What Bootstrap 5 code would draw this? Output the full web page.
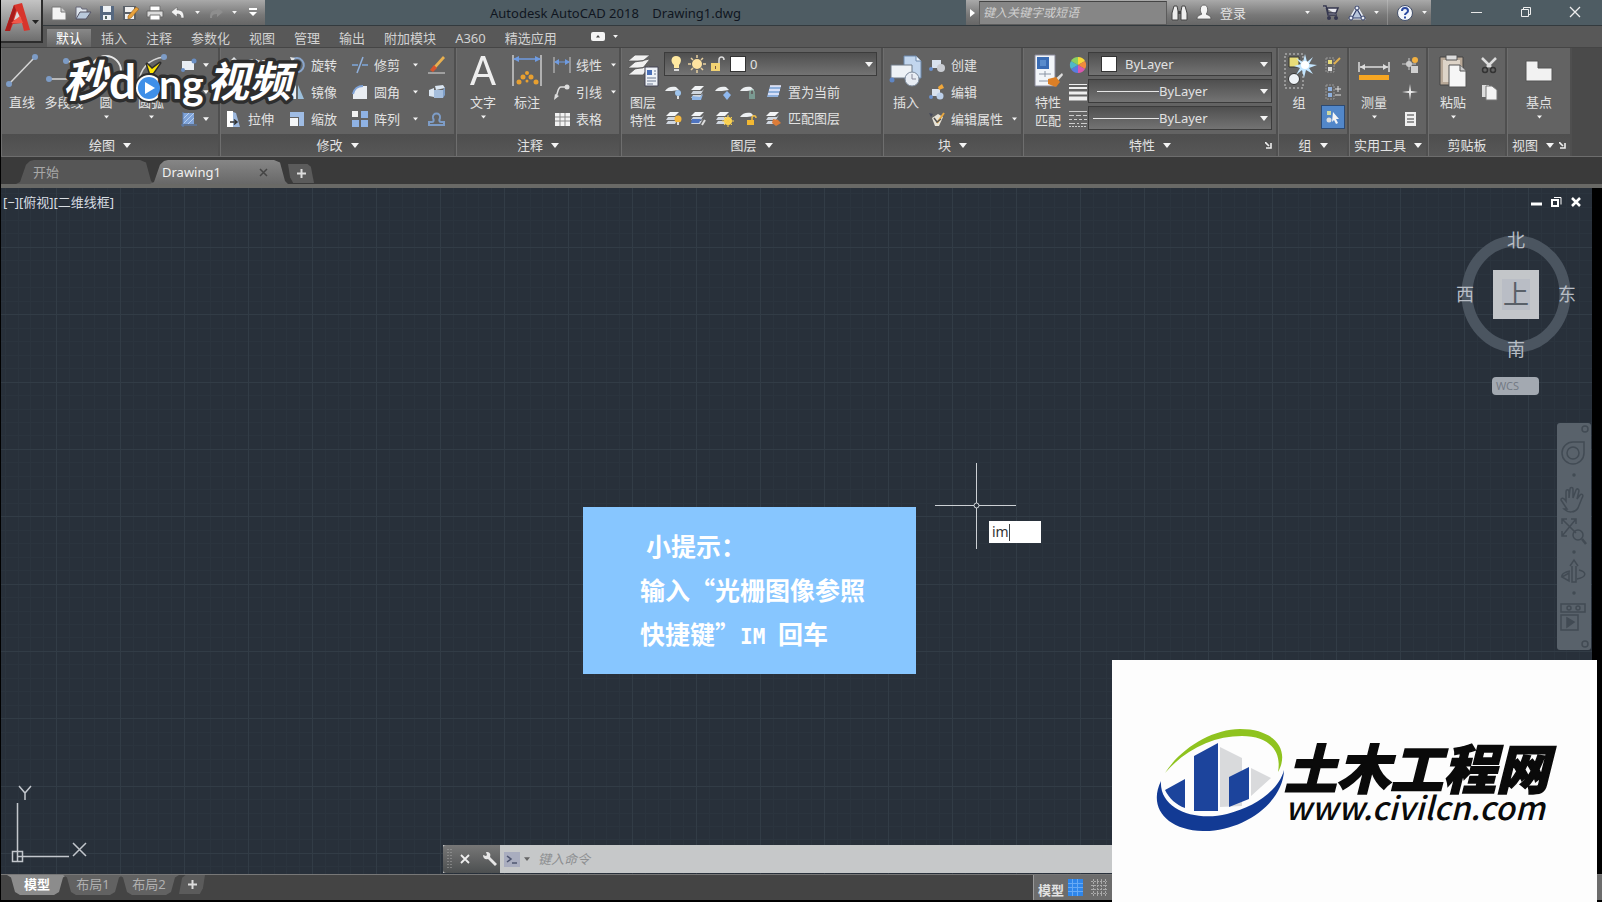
<!DOCTYPE html>
<html lang="zh-CN">
<head>
<meta charset="utf-8">
<meta name="viewport" content="width=device-width, initial-scale=1">
<title>Autodesk AutoCAD 2018 Drawing1.dwg</title>
<link href="https://cdn.jsdelivr.net/npm/bootstrap@5.3.0/dist/css/bootstrap.min.css" rel="stylesheet">
<style>
  body{background:#000;color:#e2e2e2;font:13px/18px "Noto Sans","Noto Sans CJK SC",sans-serif;overflow:hidden}
  button,input,select{font:inherit;color:inherit}
  svg{display:block;flex:none}
  .plain{background:none;border:0;padding:0;border-radius:0;color:inherit;font-size:13px;line-height:18px}
  .app{padding:0 0 2px 1px;background:#000}

  /* title bar */
  .appbtn{width:42px;height:43px;background:linear-gradient(#c4c4c4,#6e6e6e);border-right:2px solid #2c2c2c;border-bottom:2px solid #2c2c2c;flex:none}
  .headrow{background:#585858}
  .titlebar{height:26px;background:#4e5c63;border-bottom:1px solid #333a3e}
  .metal{background:linear-gradient(#a9a9a9,#787878 60%,#666)}
  .qat{width:222px;padding-left:4px}
  .qat button{width:25px;height:24px}
  .qat .narrow{width:14px}
  .doctitle{color:#10161f;font-size:13px;white-space:pre}
  .infobar{width:465px}
  .search{width:188px;height:24px;background:#868686;border:1px solid #5c5c5c;border-top-color:#444;font-style:italic;font-size:12px;padding:0 3px}
  .search::placeholder{color:#d0d0d0;opacity:1}
  .winbtns{width:171px;padding:0 3px 0 21px}
  .winbtns button{width:49px;height:24px}
  .rtabs{height:21px;gap:1px;padding-left:4px}
  .rtabs a{color:#d2d2d2;text-decoration:none;padding:0 9px;height:18px}
  .rtabs a.on{background:linear-gradient(#888,#656565);color:#fff}

  /* ribbon */
  .ribbon{background:#4a4a4a;border-top:1px solid #454545;border-bottom:1px solid #6d6d6d}
  .pane{border-right:2px solid #4f4f4f;border-left:1px solid #6e6e6e;background:#636363;min-width:0}
  .pane-body{height:86px}
  .pane-foot{height:22px;background:linear-gradient(#4e4e4e,#575757);position:relative}
  .launch{position:absolute;right:4px;top:8px}
  .big{padding-top:5px;width:40px;flex:none;align-self:flex-start;white-space:nowrap}
  .big .pic{height:36px;margin-bottom:4px}
  .stackcol{padding-top:3px}
  .stackcol.apart{margin-left:14px}
  .rowbtn{height:27px;gap:5px;white-space:nowrap}
  .combo{height:24px;background:linear-gradient(#4f4f4f,#737373);border:1px solid #3c3c3c;padding-right:3px}
  .combo select{appearance:none;background:none;border:0;outline:0;padding:0;min-width:0}
  .combo option{color:#222}
  .swatch{width:16px;height:16px;background:#fff;border:1px solid #333}
  .rule{height:1px;background:#e6e6e6}
  .pressed{width:24px;height:24px;background:#5287c9;border:1px solid #2d4a72}

  /* file tabs */
  .filetabs{height:27px;background:#3a3a3a;padding:3px 0 0 15px}
  .filetab{height:24px;width:138px;padding:0 20px 0 17px;color:#a8a8a8;text-decoration:none;background:#565656;clip-path:polygon(0 100%,4px 92%,10px 20%,14px 4%,18px 0,calc(100% - 14px) 0,calc(100% - 8px) 10%,calc(100% - 3px) 88%,100% 100%)}
  .filetab.on{background:linear-gradient(#868686,#686868);color:#f0f0f0;margin-left:-4px;padding-left:12px}
  .addtab{width:26px;height:19px;background:#5b5b5b;clip-path:polygon(0 0,75% 0,88% 15%,100% 100%,20% 100%,8% 70%)}
  .addtab.flip{clip-path:polygon(100% 0,25% 0,12% 15%,0 100%,80% 100%,92% 70%)}
  .edge{height:4px;background:#696966}

  /* drawing area */
  .canvas{background:#28303a;margin-right:10px;min-height:500px;overflow:hidden}
  .canvas>*{position:absolute}
  .vplabel{left:2px;top:5px;color:#d8dde2}
  .vpwin{right:10px;top:8px;gap:9px}
  .cube{right:14px;top:36px}
  .wcs{right:53px;top:189px;width:47px;height:18px;background:#a3a9b1;border-radius:4px;color:#747b85;font-size:11px;line-height:18px;padding-left:4px;text-align:left}
  .navpad{right:1px;top:235px;width:34px;height:227px;background:#59626b;border-radius:3px}
  .tip{left:582px;top:319px;padding:16px 51px 19px 57px;background:#87c6ff;color:#fff;font:700 25px/44px "Noto Sans CJK SC",sans-serif;white-space:pre}
  .tip p{margin:0}
  .tip .en{font:700 21px/21px "DejaVu Sans Mono",monospace}
  .cross{left:934px;top:275px}
  .dyn{left:988px;top:333px;width:52px;height:22px;background:#fff;color:#333}
  .dyn input{width:23px;border:0;background:none;outline:0;padding:0 0 0 3px;font-size:14px}
  .dyn i{width:1px;height:17px;background:#444;margin-left:-3px}
  .ucs{left:8px;bottom:7px}
  .cmd{left:442px;right:0;bottom:1px;height:28px;background:#c6c8c9}
  .cmd .grip{width:57px;background:linear-gradient(#777,#4c4f50);border-radius:3px 0 0 3px}
  .cmd input{border:0;background:none;outline:0;font-style:italic;padding:0}
  .cmd input::placeholder{color:#8d8f91;opacity:1}

  /* status bar */
  .status{height:26px;background:#444;border-top:1px solid #777}
  .laytabs{padding-left:6px}
  .lay{height:20px;width:60px;margin-right:-4px;color:#b0b0b0;background:#626262;text-decoration:none;text-align:center;clip-path:polygon(0 0,100% 0,calc(100% - 4px) 12%,calc(100% - 8px) 85%,calc(100% - 13px) 100%,13px 100%,8px 85%,4px 12%)}
  .lay.on{background:#8c8c8c;color:#fff;font-weight:700}
  .modes{width:569px;background:#6c6c6c;border-left:1px solid #999}

  .brandmark{left:58px;top:44px}
  .site{right:5px;bottom:0;width:485px;background:#fdfdfd}
</style>
</head>
<body>

<svg width="0" height="0" class="position-absolute" aria-hidden="true">
  <defs>
    <symbol id="dn" viewBox="0 0 8 5"><path d="M0 0h8L4 5z" fill="#f4f4f4"/></symbol>
    <symbol id="launch" viewBox="0 0 7 7"><path d="M0 0l4 4M6 1v5H1" stroke="#eee" stroke-width="1.6" fill="none"/></symbol>
    <symbol id="sheets" viewBox="0 0 18 18"><path d="M6 3h9l-4 4H2z" fill="#f2f4f6"/><path d="M4 8h9l2-2-3 5H2zM4 12h8l2-2-3 5H2z" fill="#cfd6df"/></symbol>
    <symbol id="sheet" viewBox="0 0 18 18"><path d="M1 8c2-4 7-5 11-4l3 3-7 1z" fill="#eceff2"/></symbol>
  </defs>
</svg>

<div class="app d-flex flex-column vh-100 position-relative">

  <header class="headrow d-flex">
    <button class="plain appbtn d-flex align-items-center" aria-label="应用程序菜单">
      <svg width="40" height="40" viewBox="0 0 40 40">
        <path d="M4 30L13 4l8-2 8 27-6 1-2-8-9 1-3 7z" fill="#d8352c"/>
        <path d="M13 4l2 5-6 21-5 0z" fill="#a81d1b"/><path d="M16 10l4 8-7 1z" fill="#dcdcdc"/><path d="M10 22l9-7 3 7z" fill="#f0584a"/>
        <path d="M31 19h7l-3.500 4z" fill="#222"/>
      </svg>
    </button>
    <div class="flex-grow-1">
      <div class="titlebar d-flex">
        <div class="qat metal d-flex align-items-center">
          <button class="plain d-flex align-items-center justify-content-center" aria-label="新建"><svg width="18" height="16" viewBox="0 0 18 16"><path d="M2 2h9l5 5v8H2z" fill="#f4f4f4" stroke="#777"/><path d="M11 2v5h5" fill="#ccc" stroke="#777"/></svg></button>
          <button class="plain d-flex align-items-center justify-content-center" aria-label="打开"><svg width="18" height="16" viewBox="0 0 18 16"><path d="M2 14V2h5l1 2h5v3" fill="#dfe6ee" stroke="#667"/><path d="M2 14l4-7h11l-5 7z" fill="#b9c9dc" stroke="#556"/></svg></button>
          <button class="plain d-flex align-items-center justify-content-center" aria-label="保存"><svg width="16" height="16" viewBox="0 0 16 16"><path d="M1 1h14v14H1z" fill="#566880"/><path d="M4 1h8v6H4zM4 10h8v5H4z" fill="#eef2f6"/><path d="M6 11h2v3H6z" fill="#566"/></svg></button>
          <button class="plain d-flex align-items-center justify-content-center" aria-label="另存为"><svg width="18" height="16" viewBox="0 0 18 16"><path d="M1 1h13v14H1z" fill="#5a6068"/><path d="M3 2h9v5H3zM3 9h9v5H3z" fill="#f0f0f0"/><path d="M6 11l8-9 3 2-8 9-3 1z" fill="#e8a23c" stroke="#8a5a20" stroke-width=".6"/></svg></button>
          <button class="plain d-flex align-items-center justify-content-center" aria-label="打印"><svg width="18" height="16" viewBox="0 0 18 16"><path d="M4 1h10v5H4z" fill="#fff" stroke="#777"/><path d="M1 6h16v6H1z" fill="#dcdcdc" stroke="#666"/><path d="M4 10h10v5H4z" fill="#fff" stroke="#777"/></svg></button>
          <button class="plain d-flex align-items-center justify-content-center" aria-label="放弃"><svg width="16" height="14" viewBox="0 0 16 14"><path d="M7 1v3c5 0 7 2 7 8h-3c0-3-1-4-4-4v3L1 6z" fill="#f2f2f2" stroke="#666" stroke-width=".6"/></svg></button>
          <button class="plain narrow" aria-label="放弃列表"><svg class="mx-auto" width="5" height="3"><use href="#dn"/></svg></button>
          <button class="plain d-flex align-items-center justify-content-center" aria-label="重做"><svg width="16" height="14" viewBox="0 0 16 14"><path d="M9 1v3C4 4 2 6 2 12h2c0-3 1-4 5-4v3l6-5z" fill="#8e8e8e"/></svg></button>
          <button class="plain narrow" aria-label="重做列表"><svg class="mx-auto" width="5" height="3"><use href="#dn"/></svg></button>
          <button class="plain" aria-label="自定义"><svg class="mx-auto" width="10" height="9" viewBox="0 0 10 9"><path d="M1 0h8v2H1zM1 4h8L5 8z" fill="#fff"/></svg></button>
        </div>
        <div class="doctitle flex-grow-1 text-center align-self-center">Autodesk AutoCAD 2018    Drawing1.dwg</div>
        <div class="infobar metal d-flex align-items-center">
          <svg class="ms-1 me-1" width="5" height="8" viewBox="0 0 5 8"><path d="M0 0v8l5-4z" fill="#fff"/></svg>
          <input class="search" type="text" aria-label="搜索" placeholder="键入关键字或短语">
          <button class="plain ms-1" aria-label="搜索"><svg width="17" height="18" viewBox="0 0 17 18"><path d="M3 2h3l1 5v9H1V9zM11 2h3l2 7v7h-6V7z" fill="#eee" stroke="#444"/><path d="M7 7h3v3H7z" fill="#444"/></svg></button>
          <button class="plain d-flex align-items-center gap-2 ms-2"><svg width="16" height="17" viewBox="0 0 16 17"><path d="M8 1c5 0 4 8 2 9 1 1 5 1 5 5H1c0-4 4-4 5-5C4 9 3 1 8 1z" fill="#f4f4f4" stroke="#555" stroke-width=".8"/></svg>登录</button>
          <svg class="ms-auto me-2" width="5" height="3"><use href="#dn"/></svg>
          <button class="plain ms-1" aria-label="商店"><svg width="18" height="18" viewBox="0 0 18 18"><path d="M1 2h3l2 9h9M5 4h11l-2 5H6z" fill="#e8e8ee" stroke="#34364e" stroke-width="1.500"/><circle cx="7" cy="14" r="2" fill="#34364e"/><circle cx="14" cy="14" r="2" fill="#34364e"/></svg></button>
          <button class="plain ms-2" aria-label="A360"><svg width="18" height="16" viewBox="0 0 18 16"><path d="M9 3l6 10H3z" fill="#c4cfe0" stroke="#e9eef6" stroke-width="3"/><path d="M9 4l5 9H4z" fill="#b8c6dc" stroke="#34406a" stroke-width="1.200"/><g fill="#e9eef6" stroke="#34406a"><circle cx="9" cy="3" r="2"/><circle cx="3" cy="13" r="2"/><circle cx="15" cy="13" r="2"/></g></svg></button>
          <svg class="ms-2" width="5" height="3"><use href="#dn"/></svg>
          <span class="vr ms-2 me-2"></span>
          <button class="plain" aria-label="帮助"><svg width="18" height="18" viewBox="0 0 18 18"><circle cx="9" cy="9" r="7.500" fill="#f4f6fa" stroke="#44506a"/><path d="M6 7c0-4 6-4 6 0 0 2-3 2-3 4M9 12.500v2" fill="none" stroke="#2c4aa0" stroke-width="2"/></svg></button>
          <svg class="ms-2 me-1" width="5" height="3"><use href="#dn"/></svg>
        </div>
        <div class="winbtns d-flex">
          <button class="plain" aria-label="最小化"><svg class="mx-auto" width="11" height="11"><path d="M0 5.500h11" stroke="#e8e8e8"/></svg></button>
          <button class="plain" aria-label="还原"><svg class="mx-auto" width="12" height="12"><path d="M1.500 3.500h7v7h-7zM3.500 3V1.500h7v7H9" fill="none" stroke="#eee"/></svg></button>
          <button class="plain" aria-label="关闭"><svg class="mx-auto" width="12" height="12"><path d="M1 1l10 10M11 1L1 11" stroke="#eee" stroke-width="1.300"/></svg></button>
        </div>
      </div>
      <nav class="rtabs d-flex align-items-end">
        <a class="on" href="#">默认</a><a href="#">插入</a><a href="#">注释</a><a href="#">参数化</a><a href="#">视图</a><a href="#">管理</a><a href="#">输出</a><a href="#">附加模块</a><a href="#">A360</a><a href="#">精选应用</a>
        <button class="plain d-flex align-items-center gap-2 align-self-center ms-4" aria-label="最小化功能区"><svg width="14" height="9" viewBox="0 0 14 9"><rect width="14" height="9" rx="2" fill="#f4f4f4"/><path d="M5 5.500h4L7 3z" fill="#444"/></svg><svg width="5" height="3"><use href="#dn"/></svg></button>
      </nav>
    </div>
  </header>

  <section class="ribbon d-flex" aria-label="功能区">
    <div class="pane" style="flex:216 1 0">
      <div class="pane-body d-flex">
        <button class="plain big"><svg class="pic mx-auto" width="34" height="36" viewBox="0 0 34 36"><path d="M4 31L30 4" stroke="#d6d6d6" stroke-width="1.500"/><circle cx="4" cy="31" r="3" fill="#7d9cc6"/><circle cx="30" cy="4" r="3" fill="#7d9cc6"/></svg>直线</button>
        <button class="plain big" style="width:44px"><svg class="pic mx-auto" width="36" height="36" viewBox="0 0 36 36"><path d="M3 26h17c14 0 14-17 0-18" fill="none" stroke="#d6d6d6" stroke-width="1.500"/><circle cx="3" cy="26" r="3" fill="#7d9cc6"/><circle cx="20" cy="8" r="3" fill="#7d9cc6"/></svg>多段线</button>
        <button class="plain big" style="width:40px"><svg class="pic mx-auto" width="34" height="36" viewBox="0 0 34 36"><circle cx="17" cy="18" r="15" fill="none" stroke="#e8e8e8" stroke-width="2"/><circle cx="17" cy="18" r="2" fill="#7d9cc6"/></svg>圆<svg class="mx-auto mt-1" width="5" height="4"><use href="#dn"/></svg></button>
        <button class="plain big" style="width:50px"><svg class="pic mx-auto" width="34" height="36" viewBox="0 0 34 36"><path d="M4 32C6 16 14 6 30 4" fill="none" stroke="#d6d6d6" stroke-width="1.500"/><circle cx="30" cy="4" r="3" fill="#7d9cc6"/><circle cx="4" cy="32" r="3" fill="#7d9cc6"/></svg>圆弧<svg class="mx-auto mt-1" width="5" height="4"><use href="#dn"/></svg></button>
        <div class="stackcol ms-1">
          <button class="plain rowbtn d-flex align-items-center" aria-label="矩形"><svg width="18" height="16" viewBox="0 0 18 16"><path d="M2 4h12v9H2z" fill="#e9eef4"/><circle cx="14" cy="4" r="2.500" fill="#6a8fc4"/><circle cx="3" cy="13" r="2" fill="#6a8fc4"/></svg><svg width="6" height="4"><use href="#dn"/></svg></button>
          <button class="plain rowbtn d-flex align-items-center" aria-label="椭圆"><svg width="18" height="16" viewBox="0 0 18 16"><ellipse cx="9" cy="8" rx="7" ry="5" fill="none" stroke="#ddd"/></svg><svg width="6" height="4"><use href="#dn"/></svg></button>
          <button class="plain rowbtn d-flex align-items-center" aria-label="图案填充"><svg width="18" height="16" viewBox="0 0 18 16"><path d="M3 2h11v11H3z" fill="#7fa3d8"/><path d="M3 8l6-6M3 13L14 2M8 13l6-6" stroke="#b9d0f0"/><path d="M1 14h16M3 1v15" stroke="#5c82bc"/></svg><svg width="6" height="4"><use href="#dn"/></svg></button>
        </div>
      </div>
      <div class="pane-foot d-flex align-items-center justify-content-center gap-2">绘图<svg width="8" height="5"><use href="#dn"/></svg></div>
    </div>

    <div class="pane" style="flex:233 1 0">
      <div class="pane-body d-flex ps-1">
        <div class="stackcol">
          <button class="plain rowbtn d-flex align-items-center"><svg width="18" height="18" viewBox="0 0 18 18"><path d="M9 1l3 3h-2v4h4V6l3 3-3 3v-2h-4v4h2l-3 3-3-3h2v-4H4v2L1 9l3-3v2h4V4H6z" fill="#e2e6ea"/></svg>移动</button>
          <button class="plain rowbtn d-flex align-items-center"><svg width="18" height="18" viewBox="0 0 18 18"><circle cx="6" cy="7" r="4" fill="#ddd"/><circle cx="12" cy="11" r="4" fill="#8fb0dc"/></svg>复制</button>
          <button class="plain rowbtn d-flex align-items-center"><svg width="18" height="18" viewBox="0 0 18 18"><path d="M2 1h6v16H2z" fill="#fff"/><path d="M8 2l3 1 4 14H8z" fill="#9db8dd"/><path d="M5 12h6M9 9.500l3 2.500-3 2.500" stroke="#333" fill="none" stroke-width="1.500"/></svg>拉伸</button>
        </div>
        <div class="stackcol apart">
          <button class="plain rowbtn d-flex align-items-center"><svg width="18" height="18" viewBox="0 0 18 18"><path d="M4 4a7 7 0 1 1-1 9" fill="none" stroke="#8aa6cc" stroke-width="2"/><path d="M2 1l5 1-3 4z" fill="#e6e6e6"/></svg>旋转</button>
          <button class="plain rowbtn d-flex align-items-center"><svg width="18" height="18" viewBox="0 0 18 18"><path d="M8 2v14H1z" fill="#eee"/><path d="M10 2l6 14h-6z" fill="#9cc0dc"/></svg>镜像</button>
          <button class="plain rowbtn d-flex align-items-center"><svg width="18" height="18" viewBox="0 0 18 18"><path d="M2 2h14v14h-5V7H2z" fill="#9fbce4"/><path d="M2 8h8v8H2z" fill="#f4f6f8"/></svg>缩放</button>
        </div>
        <div class="stackcol apart">
          <button class="plain rowbtn d-flex align-items-center"><svg width="18" height="18" viewBox="0 0 18 18"><path d="M1 9h6M11 9h6" stroke="#7fa8dc" stroke-width="1.500"/><path d="M12 1L6 17" stroke="#8fb0dc" stroke-width="1.500"/></svg>修剪<svg class="ms-2" width="5" height="4"><use href="#dn"/></svg></button>
          <button class="plain rowbtn d-flex align-items-center"><svg width="18" height="18" viewBox="0 0 18 18"><path d="M2 16V11C3 6 7 3 12 3h4v13z" fill="#e9edf2"/><path d="M2 11C3 6 7 3 12 3" fill="none" stroke="#7fa3d8" stroke-width="2"/></svg>圆角<svg class="ms-2" width="5" height="4"><use href="#dn"/></svg></button>
          <button class="plain rowbtn d-flex align-items-center"><svg width="18" height="18" viewBox="0 0 18 18"><path d="M1 1h6v6H1z" fill="#f2f2f2"/><path d="M10 1h7v7h-7zM1 10h7v7H1zM10 10h7v7h-7z" fill="#8fb2e4"/></svg>阵列<svg class="ms-2" width="5" height="4"><use href="#dn"/></svg></button>
        </div>
        <div class="stackcol ms-auto me-2">
          <button class="plain rowbtn d-flex align-items-center" aria-label="删除"><svg width="19" height="18" viewBox="0 0 19 18"><path d="M7 10l9-10 2 2-9 10z" fill="#e8b050"/><path d="M3 14l4-5 3 3-4 4z" fill="#d9542c"/><path d="M1 17h17" stroke="#ddd"/></svg></button>
          <button class="plain rowbtn d-flex align-items-center" aria-label="分解"><svg width="19" height="18" viewBox="0 0 19 18"><path d="M2 7l5-2v9l-5-1zM8 3l8-1 2 3-9 2z" fill="#dbe6f2"/><path d="M7 7h9v8H7z" fill="#a5bedd"/><path d="M16 7l2-3v8l-2 3z" fill="#7f9fc8"/></svg></button>
          <button class="plain rowbtn d-flex align-items-center" aria-label="偏移"><svg width="19" height="18" viewBox="0 0 19 18"><path d="M2 15v-3h3c2 0 2-2 1-4-1-6 8-6 7 0-1 2-1 4 1 4h3v3z" fill="none" stroke="#7d9cc6" stroke-width="2"/></svg></button>
        </div>
      </div>
      <div class="pane-foot d-flex align-items-center justify-content-center gap-2">修改<svg width="8" height="5"><use href="#dn"/></svg></div>
    </div>

    <div class="pane" style="flex:162 1 0">
      <div class="pane-body d-flex ps-1">
        <button class="plain big" style="width:44px"><svg class="pic mx-auto" width="30" height="36" viewBox="0 0 30 36"><path d="M2 32L13 3h4l11 29h-4l-3-8H9l-3 8zM10 21h10L15 7z" fill="#eee" fill-rule="evenodd"/></svg>文字<svg class="mx-auto mt-1" width="5" height="4"><use href="#dn"/></svg></button>
        <button class="plain big" style="width:44px"><svg class="pic mx-auto" width="32" height="36" viewBox="0 0 32 36"><path d="M2 2v31M30 2v31" stroke="#ccc" stroke-width="1.500"/><path d="M3 6h26" stroke="#6f9be0" stroke-width="1.500"/><path d="M2 6l6-3v6zM30 6l-6-3v6z" fill="#6f9be0"/><g fill="#e8a030"><circle cx="8" cy="29" r="2.500"/><circle cx="12" cy="24" r="2.500"/><circle cx="16" cy="20" r="2"/><circle cx="20" cy="24" r="2.500"/><circle cx="25" cy="29" r="2.500"/><circle cx="16" cy="28" r="1.500"/></g></svg>标注</button>
        <div class="stackcol ms-1">
          <button class="plain rowbtn d-flex align-items-center"><svg width="18" height="18" viewBox="0 0 18 18"><path d="M1 1v16M17 1v16" stroke="#ccc"/><path d="M2 6h14" stroke="#6f9be0"/><path d="M1 6l5-3v6zM17 6l-5-3v6z" fill="#6f9be0"/></svg>线性<svg class="ms-1" width="5" height="4"><use href="#dn"/></svg></button>
          <button class="plain rowbtn d-flex align-items-center"><svg width="18" height="18" viewBox="0 0 18 18"><path d="M3 14C5 9 5 4 8 4h6" fill="none" stroke="#ddd" stroke-width="1.500"/><circle cx="14" cy="4" r="2.500" fill="#ddd"/><path d="M1 17l1-6 4 2z" fill="#ddd"/></svg>引线<svg class="ms-1" width="5" height="4"><use href="#dn"/></svg></button>
          <button class="plain rowbtn d-flex align-items-center"><svg width="18" height="18" viewBox="0 0 18 18"><path d="M2 3h15v13H2z" fill="#f2f2f2"/><path d="M2 7h15M2 11h15M7 3v13M12 3v13" stroke="#888"/></svg>表格</button>
        </div>
      </div>
      <div class="pane-foot d-flex align-items-center justify-content-center gap-2">注释<svg width="8" height="5"><use href="#dn"/></svg></div>
    </div>

    <div class="pane" style="flex:259 1 0">
      <div class="pane-body d-flex">
        <button class="plain big" style="width:42px"><svg class="pic mx-auto" width="32" height="36" viewBox="0 0 32 36"><path d="M8 2h15l-7 6H1zM8 9l15-3-7 9H1zM8 16l15-3-7 9H1z" fill="#f0f0f0" stroke="#555" stroke-width=".8"/><path d="M18 14h13v19H18z" fill="#eef2f8" stroke="#445"/><path d="M20 17h5v5h-5z" fill="#4a70b8"/><path d="M27 18h2M27 21h2M20 25h9M20 28h9M20 31h6" stroke="#6a7890"/></svg>图层<br>特性</button>
        <div class="stackcol pt-1 flex-grow-1 me-1">
          <div class="combo d-flex align-items-center ps-1">
            <svg width="15" height="18" viewBox="0 0 15 18"><path d="M7 1c6 0 6 6 3 9v3H5v-3C1 7 2 1 7 1z" fill="#ffe9a0"/><path d="M5 14h5v2H5z" fill="#ddd"/></svg>
            <svg class="ms-1" width="18" height="18" viewBox="0 0 18 18"><circle cx="9" cy="9" r="5" fill="#ffe3a0"/><path d="M9 0v3M9 15v3M0 9h3M15 9h3M3 3l2 2M13 13l2 2M15 3l-2 2M5 13l-2 2" stroke="#e8d0a0" stroke-width="1.500"/></svg>
            <svg class="ms-1" width="16" height="18" viewBox="0 0 16 18"><path d="M9 8V5c0-4 5-4 5 0" fill="none" stroke="#ddd" stroke-width="1.500"/><path d="M1 8h9v8H1z" fill="#f2d272"/><path d="M5 11h1v3H5z" fill="#754"/></svg>
            <span class="swatch ms-1 me-1"></span>
            <select class="flex-grow-1" aria-label="图层"><option>0</option></select><svg width="8" height="5"><use href="#dn"/></svg>
          </div>
          <div class="rowbtn d-flex align-items-center mt-1" style="height:24px">
            <button class="plain" aria-label="关闭图层"><svg width="20" height="18" viewBox="0 0 20 18"><use href="#sheet" width="18" height="18"/><circle cx="14" cy="10" r="3" fill="#9fc4ec"/><path d="M13 13h2v3h-2z" fill="#ddd"/></svg></button>
            <button class="plain" aria-label="隔离"><svg width="20" height="18" viewBox="0 0 20 18"><use href="#sheets" width="18" height="18"/><path d="M3 13l8 1 3-3-2 6H3z" fill="#8db4e6"/></svg></button>
            <button class="plain" aria-label="冻结"><svg width="20" height="18" viewBox="0 0 20 18"><use href="#sheet" width="18" height="18"/><path d="M13 8l4 4-4 5-4-5z" fill="#8fb8ee"/></svg></button>
            <button class="plain" aria-label="锁定"><svg width="20" height="18" viewBox="0 0 20 18"><use href="#sheet" width="18" height="18"/><path d="M11 11V9c0-3 4-3 4 0v2" stroke="#9cb" fill="none"/><path d="M10 11h6v5h-6z" fill="#7a9a92"/></svg></button>
            <button class="plain d-flex align-items-center gap-1"><svg width="20" height="18" viewBox="0 0 20 18"><path d="M6 3h11l-3 11H3z" fill="#8fb0dc"/><path d="M6 3h11M5 7h11M4 11h11" stroke="#eef" stroke-width="1.500"/></svg>置为当前</button>
          </div>
          <div class="rowbtn d-flex align-items-center">
            <button class="plain" aria-label="打开图层"><svg width="20" height="18" viewBox="0 0 20 18"><use href="#sheets" width="18" height="18"/><circle cx="14" cy="10" r="3.500" fill="#f4b840"/><path d="M13 13h2v3h-2z" fill="#ddd"/></svg></button>
            <button class="plain" aria-label="取消隔离"><svg width="20" height="18" viewBox="0 0 20 18"><use href="#sheets" width="18" height="18"/><path d="M3 10h9l-2 4H2z" fill="#4f74c0"/><path d="M13 16l3-5" stroke="#ddd" stroke-width="2"/></svg></button>
            <button class="plain" aria-label="解冻"><svg width="20" height="18" viewBox="0 0 20 18"><use href="#sheets" width="18" height="18"/><circle cx="14" cy="12" r="4" fill="#ffd750"/><path d="M14 6v12M8 12h12M10 8l8 8M18 8l-8 8" stroke="#f6cc50"/></svg></button>
            <button class="plain" aria-label="解锁"><svg width="20" height="18" viewBox="0 0 20 18"><use href="#sheet" width="18" height="18"/><path d="M13 11V9c0-3 4-3 4 0" stroke="#eb4" fill="none" stroke-width="1.500"/><path d="M8 11h7v5H8z" fill="#f2b832"/></svg></button>
            <button class="plain d-flex align-items-center gap-1"><svg width="20" height="18" viewBox="0 0 20 18"><use href="#sheets" width="18" height="18"/><path d="M9 10l5 1 3 3-5 3-4-3z" fill="#dc7c38"/></svg>匹配图层</button>
          </div>
        </div>
      </div>
      <div class="pane-foot d-flex align-items-center justify-content-center gap-2">图层<svg width="8" height="5"><use href="#dn"/></svg></div>
    </div>

    <div class="pane" style="flex:137 1 0">
      <div class="pane-body d-flex">
        <button class="plain big ms-1" style="width:36px"><svg class="pic mx-auto" width="34" height="36" viewBox="0 0 34 36"><path d="M15 3h12l5 5v17H15z" fill="#c2d6ee" stroke="#6d89ad"/><path d="M27 3v5h5" fill="#eef4fb" stroke="#6d89ad"/><path d="M2 12h21v13H2z" fill="#eef2f6" stroke="#6f7a88"/><circle cx="23" cy="26" r="7" fill="#e8edf4" stroke="#7c8a9c"/><path d="M23 21v5h4" stroke="#889" fill="none"/><circle cx="3" cy="27" r="2.500" fill="#5f86c4"/></svg>插入</button>
        <div class="stackcol ms-1">
          <button class="plain rowbtn d-flex align-items-center"><svg width="18" height="18" viewBox="0 0 18 18"><path d="M4 4h9v8H4z" fill="#d9e2ee"/><circle cx="13" cy="12" r="4" fill="#c9ccd2"/><circle cx="3" cy="13" r="2" fill="#6a90cc"/></svg>创建</button>
          <button class="plain rowbtn d-flex align-items-center"><svg width="18" height="18" viewBox="0 0 18 18"><path d="M4 6h8v7H4z" fill="#d9e2ee"/><circle cx="12" cy="13" r="3.500" fill="#bcd0ea"/><circle cx="3" cy="14" r="2" fill="#6a90cc"/><path d="M14 1l2 4-5 2-1-3z" fill="#f2a83a"/></svg>编辑</button>
          <button class="plain rowbtn d-flex align-items-center"><svg width="18" height="18" viewBox="0 0 18 18"><path d="M4 8l6-4 5 3-4 9H7z" fill="#e8e4d8"/><path d="M16 3l-7 10" stroke="#e8a840" stroke-width="2"/><path d="M6 8l3 4 4-3" stroke="#555" stroke-width="1.500" fill="none"/><path d="M1 3l4 1-2 3z" fill="#44485a"/></svg>编辑属性<svg class="ms-1" width="5" height="4"><use href="#dn"/></svg></button>
        </div>
      </div>
      <div class="pane-foot d-flex align-items-center justify-content-center gap-2">块<svg width="8" height="5"><use href="#dn"/></svg></div>
    </div>

    <div class="pane" style="flex:252 1 0">
      <div class="pane-body d-flex">
        <button class="plain big ms-1"><svg class="pic mx-auto" width="32" height="36" viewBox="0 0 32 36"><path d="M3 2h20v31H3z" fill="#f2f5f9" stroke="#889"/><path d="M5 4h12v12H5z" fill="#3a6cb4"/><path d="M8 7h6v6H8z" fill="#5a8ccc"/><path d="M7 21h12M13 18v6M7 28h12" stroke="#8a94a4"/><path d="M30 20l-8 7 3 2 6-7z" fill="#ddd"/><path d="M16 26l8-2 4 5-4 5-8-3z" fill="#dc7f26"/></svg>特性<br>匹配</button>
        <div class="stackcol d-flex flex-column align-items-center" style="width:20px">
          <button class="plain rowbtn" aria-label="对象颜色"><svg width="18" height="18" viewBox="0 0 18 18"><path d="M9 9V1a8 8 0 0 1 7 4z" fill="#f8d838"/><path d="M9 9l7-4a8 8 0 0 1 0 8z" fill="#f08a3c"/><path d="M9 9l7 4a8 8 0 0 1-7 4z" fill="#d858b0"/><path d="M9 9v8a8 8 0 0 1-7-4z" fill="#5a7ce0"/><path d="M9 9l-7 4a8 8 0 0 1 0-8z" fill="#50b8c8"/><path d="M9 9L2 5a8 8 0 0 1 7-4z" fill="#8cd060"/></svg></button>
          <button class="plain rowbtn" aria-label="线宽"><svg width="18" height="18" viewBox="0 0 18 18"><path d="M0 1.500h18" stroke="#eee"/><path d="M0 5h18" stroke="#eee" stroke-width="2"/><path d="M0 10h18" stroke="#eee" stroke-width="3"/><path d="M0 15.500h18" stroke="#eee" stroke-width="4"/></svg></button>
          <button class="plain rowbtn" aria-label="线型"><svg width="18" height="18" viewBox="0 0 18 18" stroke="#ccc"><path d="M0 1.500h18"/><path d="M0 5.500h18" stroke-dasharray="5 2"/><path d="M0 9.500h18" stroke-dasharray="3 2"/><path d="M0 13.500h18" stroke-dasharray="6 2 2 2"/><path d="M0 16.500h18" stroke-dasharray="2 1"/></svg></button>
        </div>
        <div class="flex-grow-1 d-flex flex-column pt-1 me-1" style="gap:3px">
          <div class="combo d-flex align-items-center ps-2"><span class="swatch ms-1 me-2"></span><select class="flex-grow-1" aria-label="颜色"><option>ByLayer</option></select><svg width="8" height="5"><use href="#dn"/></svg></div>
          <div class="combo d-flex align-items-center ps-2"><span class="rule" style="width:62px"></span><select class="flex-grow-1" aria-label="线宽"><option>ByLayer</option></select><svg width="8" height="5"><use href="#dn"/></svg></div>
          <div class="combo d-flex align-items-center ps-1"><span class="rule" style="width:66px"></span><select class="flex-grow-1" aria-label="线型"><option>ByLayer</option></select><svg width="8" height="5"><use href="#dn"/></svg></div>
        </div>
      </div>
      <div class="pane-foot d-flex align-items-center justify-content-center gap-2">特性<svg width="8" height="5"><use href="#dn"/></svg><svg class="launch" width="7" height="7"><use href="#launch"/></svg></div>
    </div>

    <div class="pane" style="flex:68 1 0">
      <div class="pane-body d-flex">
        <button class="plain big"><svg class="pic mx-auto" width="36" height="36" viewBox="0 0 36 36"><path d="M4 1h18v34H4z" fill="none" stroke="#ccc" stroke-dasharray="2 2"/><path d="M8 4h10v10H8z" fill="#e8dc78" stroke="#333"/><circle cx="13" cy="26" r="5.500" fill="#eef2f6" stroke="#333"/><path d="M24 1l2 8 6-5-4 7 8 1-8 3 4 6-7-4-2 8-2-8-6 5 4-7-6-2 7-2-5-6 7 4z" fill="#c4e6ff"/><circle cx="24" cy="12" r="4" fill="#fff"/></svg>组</button>
        <div class="stackcol d-flex flex-column align-items-center" style="width:28px">
          <button class="plain rowbtn" aria-label="解除编组"><svg width="18" height="18" viewBox="0 0 18 18"><path d="M2 2h8v14H2z" fill="none" stroke="#999" stroke-dasharray="2 1"/><path d="M4 4h4v4H4z" fill="#e8dc78"/><path d="M4 11h4v4H4z" fill="#ddd"/><path d="M10 8l6-6" stroke="#e0b050" stroke-width="2"/></svg></button>
          <button class="plain rowbtn" aria-label="组编辑"><svg width="18" height="18" viewBox="0 0 18 18"><path d="M2 2h8v14H2z" fill="none" stroke="#999" stroke-dasharray="2 1"/><path d="M4 4h4v4H4zM4 10h4v4H4z" fill="#8fb0dc"/><path d="M11 6h6M14 3v6M11 12h6" stroke="#ddd"/></svg></button>
          <button class="plain pressed d-flex align-items-center justify-content-center" aria-label="组选择"><svg width="18" height="18" viewBox="0 0 18 18"><path d="M3 3h4v4H3z" fill="#cfd8a0"/><circle cx="5" cy="12" r="2.500" fill="#ddd"/><path d="M9 4l6 7-3 0 2 4-2 1-2-4-2 2z" fill="#f4f4f4"/></svg></button>
        </div>
      </div>
      <div class="pane-foot d-flex align-items-center justify-content-center gap-2">组<svg width="8" height="5"><use href="#dn"/></svg></div>
    </div>

    <div class="pane" style="flex:76 1 0">
      <div class="pane-body d-flex">
        <button class="plain big ms-1"><svg class="pic mx-auto" width="34" height="36" viewBox="0 0 34 36"><path d="M2 9v10M32 9v10M3 14h28" stroke="#ddd" stroke-width="1.500"/><path d="M3 14l5-3v6zM31 14l-5-3v6z" fill="#ddd"/><path d="M2 22h30v5H2z" fill="#f6a622"/></svg>测量<svg class="mx-auto mt-1" width="5" height="4"><use href="#dn"/></svg></button>
        <div class="stackcol mx-auto">
          <button class="plain rowbtn d-flex align-items-center" aria-label="快速选择"><svg width="18" height="18" viewBox="0 0 18 18"><path d="M8 2v12M1 8h14" stroke="#ccc"/><circle cx="8" cy="8" r="3" fill="#ccc"/><circle cx="14" cy="4" r="3" fill="#f2b040"/><path d="M10 10h7v7h-7z" fill="#d0d0d0"/></svg></button>
          <button class="plain rowbtn d-flex align-items-center" aria-label="点坐标"><svg width="18" height="18" viewBox="0 0 18 18"><path d="M9 1l1 7 7 1-7 1-1 7-1-7-7-1 7-1z" fill="#eee"/></svg></button>
          <button class="plain rowbtn d-flex align-items-center" aria-label="计算器"><svg width="18" height="18" viewBox="0 0 18 18"><path d="M4 2h11v14H4z" fill="#f0f0f0"/><path d="M6 5h7M6 9h7M6 12h7" stroke="#777" stroke-width="1.500"/></svg></button>
        </div>
      </div>
      <div class="pane-foot d-flex align-items-center justify-content-center gap-2">实用工具<svg width="8" height="5"><use href="#dn"/></svg></div>
    </div>

    <div class="pane" style="flex:76 1 0">
      <div class="pane-body d-flex">
        <button class="plain big ms-1"><svg class="pic mx-auto" width="30" height="36" viewBox="0 0 30 36"><path d="M2 4h23v28H2z" fill="#b9a998" stroke="#444"/><path d="M5 7h17v22H5z" fill="#ded4c8"/><path d="M8 2h11v5H8z" fill="#ddd" stroke="#555"/><path d="M11 12h11l6 6v16H11z" fill="#f6f6f6" stroke="#555"/><path d="M22 12v6h6" fill="#ccc" stroke="#555"/></svg>粘贴<svg class="mx-auto mt-1" width="5" height="4"><use href="#dn"/></svg></button>
        <div class="stackcol mx-auto">
          <button class="plain rowbtn d-flex align-items-center" aria-label="剪切"><svg width="18" height="18" viewBox="0 0 18 18"><path d="M2 2l9 9M16 2l-9 9" stroke="#ddd" stroke-width="2.500"/><circle cx="5" cy="14" r="2.500" fill="none" stroke="#333" stroke-width="1.500"/><circle cx="13" cy="14" r="2.500" fill="none" stroke="#333" stroke-width="1.500"/></svg></button>
          <button class="plain rowbtn d-flex align-items-center" aria-label="复制剪裁"><svg width="18" height="18" viewBox="0 0 18 18"><path d="M2 2h7v12H2z" fill="#ddd"/><path d="M6 3h6l5 4v10H6z" fill="#f4f4f4" stroke="#777"/></svg></button>
        </div>
      </div>
      <div class="pane-foot d-flex align-items-center justify-content-center">剪贴板</div>
    </div>

    <div class="pane" style="flex:62 1 0">
      <div class="pane-body d-flex justify-content-center">
        <button class="plain big"><svg class="pic mx-auto" width="30" height="36" viewBox="0 0 30 36"><path d="M2 8h12v7h14v13H2z" fill="#f2f2f2" stroke="#555"/></svg>基点<svg class="mx-auto mt-1" width="5" height="4"><use href="#dn"/></svg></button>
      </div>
      <div class="pane-foot d-flex align-items-center ps-1 gap-2">视图<svg width="8" height="5"><use href="#dn"/></svg><svg class="launch" width="7" height="7"><use href="#launch"/></svg></div>
    </div>
    <div style="flex:30 1 0"></div>
  </section>

  <nav class="filetabs d-flex">
    <a class="filetab d-flex align-items-center" href="#">开始</a>
    <a class="filetab on d-flex align-items-center justify-content-between" href="#">Drawing1<svg width="9" height="9"><path d="M1 1l7 7M8 1L1 8" stroke="#444" stroke-width="1.500"/></svg></a>
    <button class="plain addtab d-flex align-items-center justify-content-center mt-1" aria-label="新图形"><svg width="9" height="9"><path d="M4.500 0v9M0 4.500h9" stroke="#ddd" stroke-width="2"/></svg></button>
  </nav>
  <div class="edge"></div>

  <main class="canvas position-relative flex-grow-1">
    <svg class="w-100 h-100 top-0 start-0" aria-hidden="true">
      <defs><pattern id="grid" x="55" y="59" width="64" height="202" patternUnits="userSpaceOnUse">
        <path d="M13.500 0v202M26.500 0v202M38.500 0v202M51.500 0v202M0 13.500h64M0 27.500h64M0 40.500h64M0 54.500h64M0 81.500h64M0 94.500h64M0 108.500h64M0 121.500h64M0 148.500h64M0 162.500h64M0 175.500h64M0 188.500h64" stroke="#2b343e"/>
        <path d="M.5 0v202M0 .5h64M0 67.500h64M0 135.500h64" stroke="#323c46"/>
      </pattern></defs>
      <rect width="100%" height="100%" fill="url(#grid)"/>
    </svg>
    <div class="vplabel">[−][俯视][二维线框]</div>
    <div class="vpwin d-flex">
      <button class="plain" aria-label="最小化视口"><svg width="11" height="12"><path d="M0 8h11" stroke="#fff" stroke-width="3"/></svg></button>
      <button class="plain" aria-label="还原视口"><svg width="11" height="12"><path d="M1 4h6v6H1z" fill="none" stroke="#fff" stroke-width="2"/><path d="M3 1.500h7v7" fill="none" stroke="#fff"/></svg></button>
      <button class="plain" aria-label="关闭视口"><svg width="11" height="12"><path d="M1 2l8 8M9 2l-8 8" stroke="#fff" stroke-width="2.500"/></svg></button>
    </div>
    <svg class="cube" width="124" height="140" viewBox="0 0 124 140" font-family="Noto Sans CJK SC" font-size="18" text-anchor="middle" fill="#b8bec6">
      <ellipse cx="62" cy="70" rx="49" ry="53" fill="none" stroke="#4b5560" stroke-width="11"/>
      <path d="M39 46h46v49H39z" fill="#c3c6c9"/><path d="M48 55h28v31H48z" fill="#b9bdc5"/>
      <text x="62" y="80" font-size="26" fill="#596068">上</text>
      <text x="62" y="23">北</text><text x="11" y="77">西</text><text x="113" y="77">东</text><text x="62" y="132">南</text>
    </svg>
    <button class="plain wcs">WCS</button>
    <div class="navpad">
      <svg width="34" height="227" viewBox="0 0 34 227" fill="none" stroke="#424b54" stroke-width="1.500">
        <circle cx="28" cy="6" r="3"/><circle cx="28" cy="221" r="3"/>
        <path d="M16 19h11v11a11 11 0 1 1-11-11z"/><circle cx="16" cy="30" r="6"/><circle cx="17" cy="52" r="1"/>
        <path d="M10 86l-6-9c0-3 3-2 5 1V69c0-3 3-3 3 0v6l1-9c0-2 3-2 3 0v9l3-8c1-2 3-1 3 1l-2 8 3-4c2-2 4 0 2 3l-4 10c-3 5-10 5-14 1z"/>
        <path d="M5 96l14 14M19 96L5 113M5 101v-5h5M14 96h5v5M5 108v5h5"/><circle cx="21" cy="112" r="5"/><path d="M25 116l4 5" stroke-width="2.500"/><circle cx="17" cy="129" r="1"/>
        <path d="M15 143v16h4v-16M13 143l4-6 4 6M15 159h4"/><path d="M13 148c-5 1-9 3-8 6M22 147c8 2 8 7-2 9M5 154l7-4v8z"/><circle cx="17" cy="170" r="1"/>
        <path d="M4 181h24v8H4zM4 192h17v15H4z"/><path d="M10 195l7 4-7 5z" fill="#424b54"/><circle cx="12" cy="185" r="2"/><circle cx="21" cy="185" r="2"/>
      </svg>
    </div>
    <div class="tip"><p style="text-indent:6px">小提示：</p><p>输入“光栅图像参照</p><p>快捷键”<span class="en">IM </span>回车</p></div>
    <svg class="cross" width="81" height="86"><path d="M0 42.500h81M41.500 0v86" stroke="#ccd0d4"/><circle cx="41.500" cy="42.500" r="2.500" fill="#28303a" stroke="#d8dce0"/></svg>
    <div class="dyn d-flex align-items-center"><input type="text" value="im" aria-label="动态输入"><i></i></div>
    <svg class="ucs" width="80" height="90" viewBox="0 0 80 90" fill="none" stroke="#c2c6cc" stroke-width="1.500"><path d="M8.500 84V26M8.500 79.500H60M3.500 74.500h10v10h-10z"/><path d="M10 9l6 7 6-7M16 16v7M64 66l13 13M77 66L64 79"/></svg>
    <div class="cmd d-flex align-items-stretch">
      <div class="grip d-flex align-items-center ps-1">
        <svg width="5" height="20" viewBox="0 0 5 20"><path d="M1 0v20M4 0v20" stroke="#aaa" stroke-dasharray="1 2"/></svg>
        <button class="plain ms-2" aria-label="关闭命令行"><svg width="10" height="10"><path d="M1 1l8 8M9 1L1 9" stroke="#eee" stroke-width="1.800"/></svg></button>
        <button class="plain ms-2" aria-label="自定义"><svg class="ms-1" width="16" height="16" viewBox="0 0 16 16"><path d="M1 4l3 1 1-1-1-3c4 0 5 2 4 5l7 7-2 2-7-7C3 9 1 7 1 4z" fill="#e6e6e6"/></svg></button>
      </div>
      <label for="cmdline" class="d-flex align-items-center ps-1 gap-1 me-2"><svg width="16" height="15" viewBox="0 0 16 15"><path d="M0 0h16v15H0z" fill="#a9adbf"/><path d="M3 4l4 3-4 3M8 11h5" fill="none" stroke="#4e5570" stroke-width="1.500"/></svg><svg width="6" height="4" viewBox="0 0 8 5"><path d="M0 0h8L4 5z" fill="#666"/></svg></label>
      <input id="cmdline" class="flex-grow-1" type="text" placeholder="键入命令">
    </div>
  </main>

  <footer class="status d-flex">
    <div class="laytabs d-flex">
      <a class="lay on" href="#">模型</a><a class="lay" href="#">布局1</a><a class="lay" href="#">布局2</a>
      <button class="plain addtab flip ms-1 d-flex align-items-center justify-content-center" aria-label="新建布局"><svg width="9" height="9"><path d="M4.500 0v9M0 4.500h9" stroke="#ddd" stroke-width="2"/></svg></button>
    </div>
    <div class="modes d-flex align-items-center ms-auto">
      <button class="plain fw-bold ps-1 pe-1 pt-1">模型</button>
      <button class="plain" aria-label="栅格"><svg width="15" height="17" viewBox="0 0 15 17"><path d="M0 0h15v17H0z" fill="#2f86ea"/><path d="M0 4.500h15M0 8.500h15M0 12.500h15M4.500 0v17M9.500 0v17" stroke="#68aaf4"/></svg></button>
      <button class="plain ms-2" aria-label="捕捉"><svg width="16" height="17" viewBox="0 0 16 17"><path d="M0 2.500h16M0 6.500h16M0 10.500h16M0 14.500h16M2.500 0v17M6.500 0v17M10.500 0v17M14.500 0v17" stroke="#aaa" stroke-dasharray="2 1"/></svg></button>
    </div>
  </footer>

  <!-- video brand laid over the ribbon -->
  <svg class="brandmark position-absolute" width="260" height="90" viewBox="0 -10 260 90" font-family="Noto Sans CJK SC" font-weight="700" fill="#fff" stroke="#2e2e2e" stroke-width="7" stroke-linejoin="round" paint-order="stroke">
    <text x="5" y="43" font-size="44" font-style="italic">秒</text>
    <text x="51" y="45" font-size="48" font-family="Lato">d</text>
    <circle cx="91" cy="34" r="13" fill="#fff" stroke-width="4"/>
    <text x="101" y="45" font-size="41" font-family="Lato">ng</text>
    <text x="149" y="43" font-size="42" font-style="italic">视频</text>
    <circle cx="91" cy="34" r="11" fill="#3f8fe8" stroke="none"/><path d="M87 28l10 6-10 6z" stroke="none"/>
    <path d="M89 10l5 5 8-6-7 10h-3z" fill="#ffe500" stroke-width="3"/>
  </svg>

  <!-- site watermark card -->
  <aside class="site position-absolute">
    <svg class="w-100" viewBox="0 0 485 242" fill="#0a0a0a">
      <path d="M53 113C68 89 100 69 128 69c36 0 50 22 38 43 4-21-9-36-36-36-29 0-56 13-77 37z" fill="#8fc31f"/>
      <path d="M49 121c-2 28 34 41 66 33 28-7 52-24 57-44-1 34-43 62-81 61-37-1-55-24-42-50z" fill="#123a94"/>
      <path d="M108 87l22 11v48l-22 1zM139 108l20 10-20 18z" fill="#d9dadc"/>
      <path d="M82 96l24-13v68H82zM117 117l20-10v32l-20 8zM53 130l20-11v29c-9-3-16-10-20-18z" fill="#1c449c"/>
      <text x="172" y="129" font-family="Noto Sans CJK SC" font-weight="900" font-style="italic" font-size="53" stroke="#0a0a0a" stroke-width="1.500">土木工程网</text>
      <text x="173" y="160" font-family="Noto Sans CJK SC" font-weight="500" font-style="italic" font-size="32">www.civilcn.com</text>
    </svg>
  </aside>
</div>

<script src="https://cdn.jsdelivr.net/npm/bootstrap@5.3.0/dist/js/bootstrap.bundle.min.js"></script>
</body>
</html>
